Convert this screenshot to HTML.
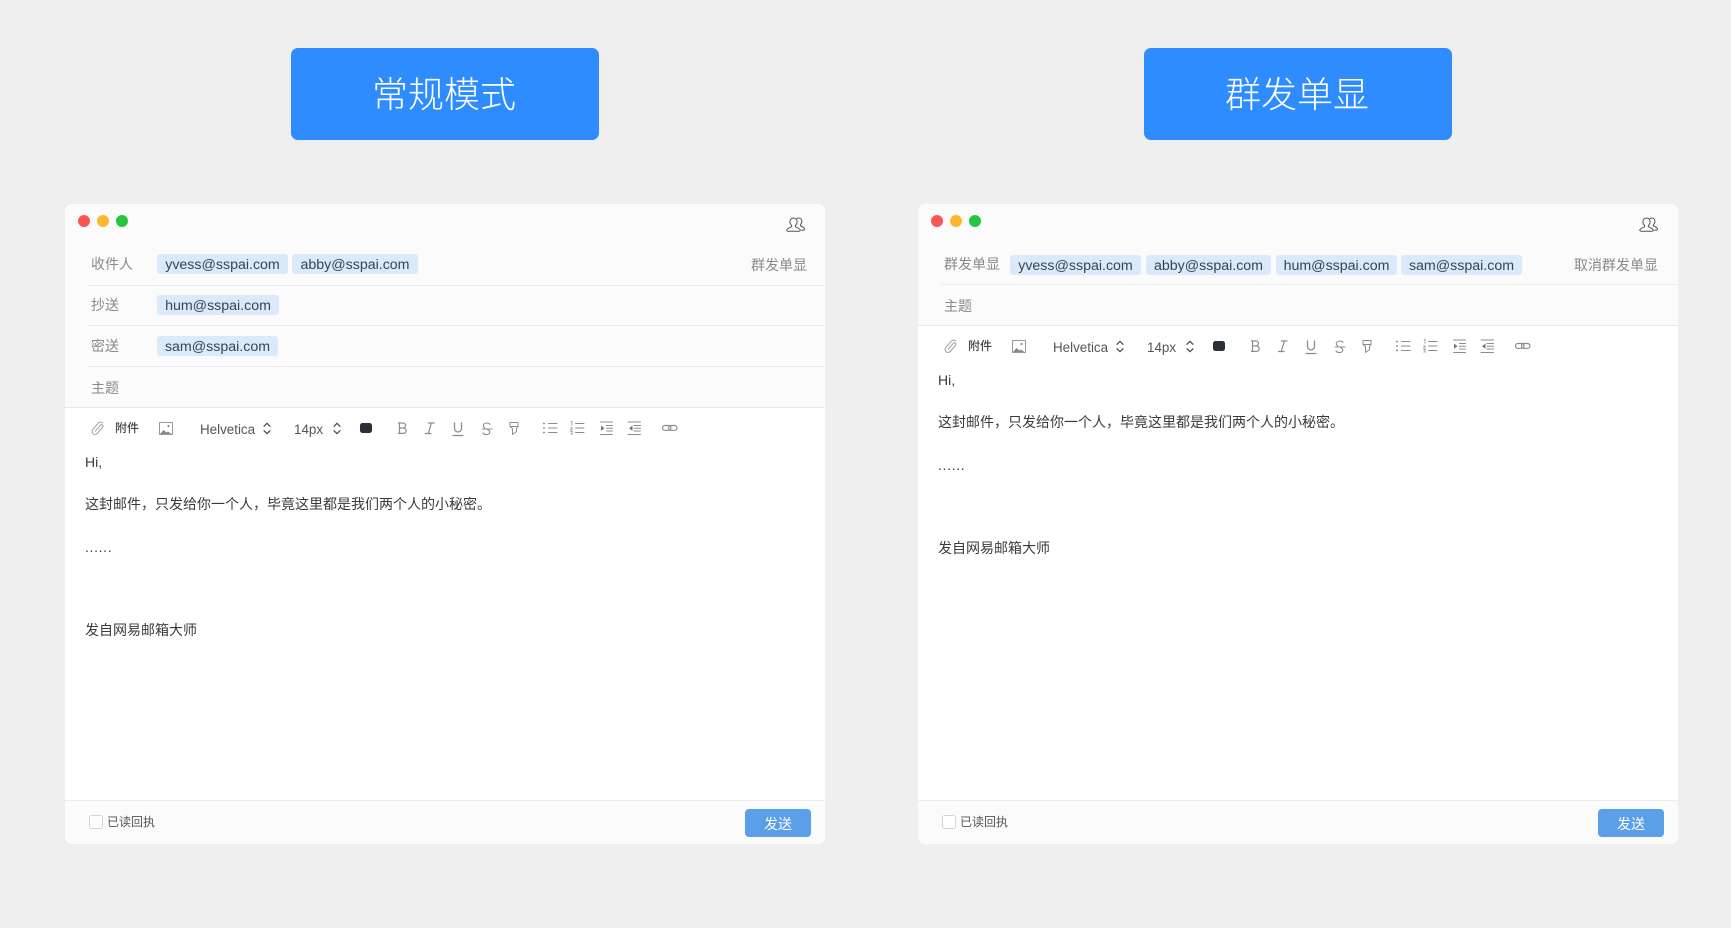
<!DOCTYPE html>
<html lang="zh">
<head>
<meta charset="utf-8">
<title>常规模式 / 群发单显</title>
<style>
html,body{margin:0;padding:0;background:#efefef;}
body{width:1731px;height:928px;position:relative;overflow:hidden;font-family:"Liberation Sans","Noto Sans CJK SC",sans-serif;color:#333;}
.banner{position:absolute;top:48px;width:306px;padding-right:2px;height:92px;background:#2f8cff;border-radius:7px;color:#fff;font-size:36px;font-weight:300;line-height:93px;text-align:center;letter-spacing:0;}
.win{position:absolute;top:204px;width:760px;height:640px;background:#fff;border-radius:7px;overflow:hidden;}
.head{position:absolute;left:0;top:0;width:760px;background:#fbfbfb;border-bottom:1px solid #e8e8e8;}
.foot{position:absolute;left:0;top:596px;width:760px;height:44px;background:#fbfbfb;border-top:1px solid #ececec;box-sizing:border-box;}
.dot{position:absolute;top:11px;width:12px;height:12px;border-radius:50%;}
.sep{position:absolute;left:23px;right:0;height:1px;background:#ececec;}
.lab{position:absolute;font-size:14px;line-height:20px;color:#8a8a8a;white-space:nowrap;}
.chip{position:absolute;height:20px;line-height:23px;background:#daeafa;border-radius:3px;font-size:14.2px;color:#3a4350;text-align:center;white-space:nowrap;}
.t{position:absolute;white-space:nowrap;}
.bar{position:absolute;left:0;width:760px;height:40px;}
.bar svg{position:absolute;left:0;top:0;}
.body{position:absolute;left:20px;font-size:14px;line-height:20px;color:#3a3a3a;white-space:nowrap;}
.dots{letter-spacing:.65px;}
.chk{position:absolute;left:24px;top:14px;width:12px;height:12px;border:1px solid #d4d4d4;border-radius:3px;background:#fff;}
.send{position:absolute;left:680px;top:8px;width:66px;height:28px;border-radius:4px;background:#5a9fe8;color:#fff;font-size:14px;line-height:31px;text-align:center;}
</style>
</head>
<body>
<svg width="0" height="0" style="position:absolute">
<defs>
<g id="tools" fill="none" stroke="#8c8c8c" stroke-width="1" stroke-linecap="round" stroke-linejoin="round">
  <path d="M33 24V16.500a1.500 1.500 0 0 1 3 0V24.500a3 3 0 0 1-6 0V16.500a3.500 3.500 0 0 1 3.500-3.500" transform="rotate(40 33 20)" stroke="#a0a0a0"/>
  <rect x="94.500" y="14.500" width="13" height="12" stroke="#999"/>
  <path d="M95 26l3.500-4 3 2.500 1.500-1 3.500 2.500z" fill="#888" stroke="none"/>
  <circle cx="103.500" cy="18" r="1" fill="#777" stroke="none"/>
  <path d="M199 18.300l3-3 3 3M199 22.700l3 3 3-3" stroke="#4a4a4a" stroke-width="1.200"/>
  <path d="M269 18.300l3-3 3 3M269 22.700l3 3 3-3" stroke="#4a4a4a" stroke-width="1.200"/>
  <rect x="295" y="15" width="12" height="10" rx="2.500" fill="#2b2f38" stroke="none"/>
  <path d="M334.500 15h3.500a2.500 2.500 0 0 1 0 5h-3.500zM334.500 20h4a2.700 2.700 0 0 1 0 5.400h-4zM333.500 15h1M333.500 25.400h1" stroke-width="1.200"/>
  <path d="M363.500 15h5.500M360.500 25.500h5.500M366.300 15l-3 10.500" stroke-width="1.200"/>
  <path d="M389.500 15v5.500a3.500 3.500 0 0 0 7 0V15M388 27.500h10" stroke-width="1.300"/>
  <path d="M425 16.300c-.6-.8-1.700-1.300-3-1.300-2.500 0-3.700 1.300-3.700 2.800 0 1 .6 1.700 1.500 2.200M417 21h10M422.500 21.500c1.700.7 2.300 1.500 2.300 2.500 0 1.500-1.300 2.600-3.300 2.600a4 4 0 0 1-3.500-1.600" stroke-width="1.100"/>
  <g transform="translate(-65 0)">
    <path d="M510 14.500h8v4l-1.500 2v3l-4 3v-6l-2.500-2zM510 18.500h8"/>
    <circle cx="544" cy="15.500" r=".9" fill="#777" stroke="none"/><circle cx="544" cy="20" r=".9" fill="#777" stroke="none"/><circle cx="544" cy="24.500" r=".9" fill="#777" stroke="none"/>
    <path d="M548.500 15.500h8.500M548.500 20h8.500M548.500 24.500h8.500"/>
    <path d="M571 13.800l1-.6v4.300M570.500 19.800h2l-2 2.200h2M570.500 23.500h2l-.8 1 .8 1.500h-2" stroke-width=".7"/>
    <path d="M575.500 15.500h8.500M575.500 20h8.500M575.500 24.500h8.500"/>
    <path d="M600.500 14h12M600.500 26.500h12M606.500 17.500h6M606.500 20.200h6M606.500 23h6"/>
    <path d="M601 17.500l3.500 2.700-3.500 2.700z" fill="#777" stroke="none"/>
    <path d="M628 14h12.500M628 26.500h12.500M634 17.500h6.500M634 20.200h6.500M634 23h6.500"/>
    <path d="M632.500 17.500l-3.500 2.700 3.500 2.700z" fill="#777" stroke="none"/>
    <rect x="662.500" y="17.500" width="8.500" height="4.800" rx="2.400" stroke-width="1.200"/>
    <rect x="668.500" y="17.500" width="8.500" height="4.800" rx="2.400" stroke-width="1.200"/>
  </g>
</g>
<g id="person" fill="none" stroke="#555" stroke-width="1" stroke-linejoin="round" stroke-linecap="round">
  <path d="M7.500 1c-2.200 0-3.600 1.700-3.600 3.800 0 1.500.7 2.800 1.700 3.600v1.400C3.800 10.500 1 11.500.8 13c-.1.800.5 1.300 1.200 1.300h11c.8 0 1.300-.5 1.200-1.300-.2-1.500-3-2.500-4.800-3.200V8.400c1-.8 1.700-2.100 1.700-3.600C11.100 2.700 9.700 1 7.500 1z"/>
  <path d="M11 1.600c.5-.4 1.100-.6 1.800-.6 1.900 0 3.100 1.500 3.100 3.400 0 1.300-.6 2.500-1.500 3.200v1.300c1.600.6 3.800 1.600 4.100 3 .1.700-.4 1.200-1 1.200h-2"/>
</g>
</defs>
</svg>

<div class="banner" style="left:291px">常规模式</div>
<div class="banner" style="left:1144px">群发单显</div>

<!-- Window 1 -->
<div class="win" style="left:65px">
  <div class="head" style="height:203px"></div>
  <div class="dot" style="left:13px;background:#fb5551"></div>
  <div class="dot" style="left:32px;background:#fdb72d"></div>
  <div class="dot" style="left:51px;background:#26c540"></div>
  <svg style="position:absolute;left:721px;top:13px" width="20" height="16"><use href="#person"/></svg>

  <div class="lab" style="left:26px;top:50px">收件人</div>
  <div class="chip" style="left:92px;top:50px;width:131px">yvess@sspai.com</div>
  <div class="chip" style="left:227px;top:50px;width:126px">abby@sspai.com</div>
  <div class="lab" style="left:686px;top:51px">群发单显</div>
  <div class="sep" style="top:81px"></div>

  <div class="lab" style="left:26px;top:91px">抄送</div>
  <div class="chip" style="left:92px;top:91px;width:122px">hum@sspai.com</div>
  <div class="sep" style="top:121px"></div>

  <div class="lab" style="left:26px;top:132px">密送</div>
  <div class="chip" style="left:92px;top:132px;width:121px">sam@sspai.com</div>
  <div class="sep" style="top:162px"></div>

  <div class="lab" style="left:26px;top:174px">主题</div>

  <div class="bar" style="top:204px">
    <svg width="760" height="40"><use href="#tools"/></svg>
    <div class="t" style="left:50px;top:11px;font-size:12px;line-height:18px;color:#444;font-weight:500">附件</div>
    <div class="t" style="left:135px;top:12px;font-size:13.4px;line-height:19px;color:#555">Helvetica</div>
    <div class="t" style="left:229px;top:12px;font-size:13.4px;line-height:19px;color:#555">14px</div>
  </div>

  <div class="body" style="top:248px">Hi,</div>
  <div class="body" style="top:290px">这封邮件，只发给你一个人，毕竟这里都是我们两个人的小秘密。</div>
  <div class="body dots" style="top:333px">......</div>
  <div class="body" style="top:416px">发自网易邮箱大师</div>

  <div class="foot">
    <div class="chk"></div>
    <div class="t" style="left:42px;top:12px;font-size:12px;line-height:18px;color:#555">已读回执</div>
    <div class="send">发送</div>
  </div>
</div>

<!-- Window 2 -->
<div class="win" style="left:918px">
  <div class="head" style="height:121px"></div>
  <div class="dot" style="left:13px;background:#fb5551"></div>
  <div class="dot" style="left:32px;background:#fdb72d"></div>
  <div class="dot" style="left:51px;background:#26c540"></div>
  <svg style="position:absolute;left:721px;top:13px" width="20" height="16"><use href="#person"/></svg>

  <div class="lab" style="left:26px;top:50px">群发单显</div>
  <div class="chip" style="left:92px;top:51px;width:131px">yvess@sspai.com</div>
  <div class="chip" style="left:228px;top:51px;width:125px">abby@sspai.com</div>
  <div class="chip" style="left:358px;top:51px;width:121px">hum@sspai.com</div>
  <div class="chip" style="left:483px;top:51px;width:121px">sam@sspai.com</div>
  <div class="lab" style="left:656px;top:51px">取消群发单显</div>
  <div class="sep" style="top:80px"></div>

  <div class="lab" style="left:26px;top:92px">主题</div>

  <div class="bar" style="top:122px">
    <svg width="760" height="40"><use href="#tools"/></svg>
    <div class="t" style="left:50px;top:11px;font-size:12px;line-height:18px;color:#444;font-weight:500">附件</div>
    <div class="t" style="left:135px;top:12px;font-size:13.4px;line-height:19px;color:#555">Helvetica</div>
    <div class="t" style="left:229px;top:12px;font-size:13.4px;line-height:19px;color:#555">14px</div>
  </div>

  <div class="body" style="top:166px">Hi,</div>
  <div class="body" style="top:208px">这封邮件，只发给你一个人，毕竟这里都是我们两个人的小秘密。</div>
  <div class="body dots" style="top:251px">......</div>
  <div class="body" style="top:334px">发自网易邮箱大师</div>

  <div class="foot">
    <div class="chk"></div>
    <div class="t" style="left:42px;top:12px;font-size:12px;line-height:18px;color:#555">已读回执</div>
    <div class="send">发送</div>
  </div>
</div>
</body>
</html>
